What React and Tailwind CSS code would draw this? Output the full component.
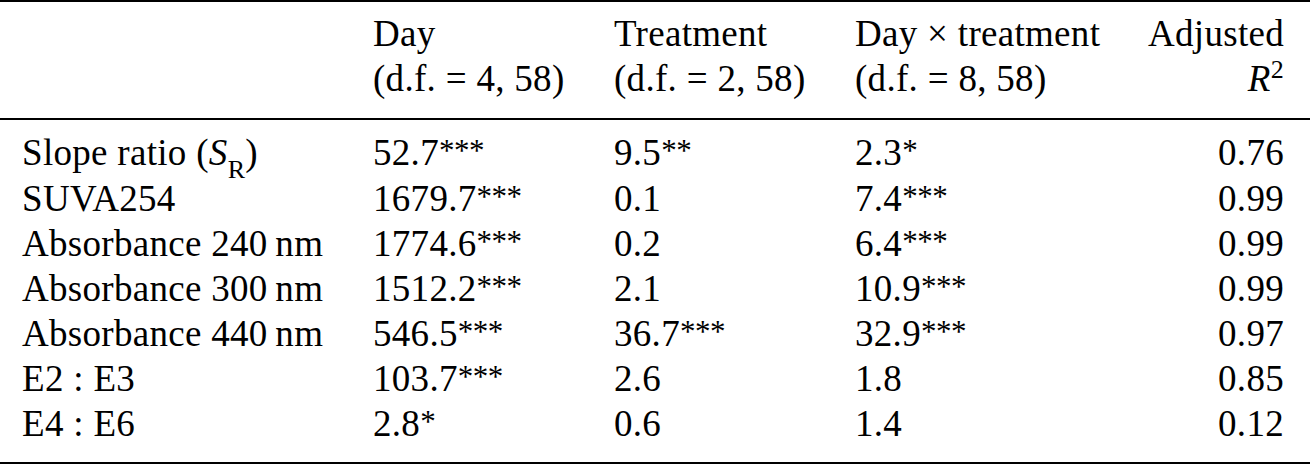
import React from 'react';

const ROWS = [
  { label: <>Slope ratio (<i>S</i><sub className="text-[26px] align-[-6px] leading-none">R</sub>)</>, day: ['52.7', '***'], trt: ['9.5', '**'], int: ['2.3', '*'], r2: '0.76' },
  { label: 'SUVA254', day: ['1679.7', '***'], trt: ['0.1'], int: ['7.4', '***'], r2: '0.99' },
  { label: 'Absorbance 240\u2009nm', day: ['1774.6', '***'], trt: ['0.2'], int: ['6.4', '***'], r2: '0.99' },
  { label: 'Absorbance 300\u2009nm', day: ['1512.2', '***'], trt: ['2.1'], int: ['10.9', '***'], r2: '0.99' },
  { label: 'Absorbance 440\u2009nm', day: ['546.5', '***'], trt: ['36.7', '***'], int: ['32.9', '***'], r2: '0.97' },
  { label: 'E2 : E3', day: ['103.7', '***'], trt: ['2.6'], int: ['1.8'], r2: '0.85' },
  { label: 'E4 : E6', day: ['2.8', '*'], trt: ['0.6'], int: ['1.4'], r2: '0.12' },
];

// value with significance stars raised as superscript
const Val = ({ v }) => (
  <span>
    {v[0]}
    {v[1] && <span className="text-[31px] leading-none align-[4px] tracking-[-0.5px]">{v[1]}</span>}
  </span>
);

const GRID = 'grid grid-cols-[351px_241px_241px_1fr_auto] pl-[22px] pr-[26px]';

export default function App() {
  return (
    <div className="w-[1310px] h-[467px] bg-white text-black text-[37px] tracking-[0.3px] leading-[45px] font-['Liberation_Serif',serif]">
      {/* top rule */}
      <div className="h-[2px] bg-black" />

      {/* header */}
      <div className={`${GRID} pt-[9px] pb-[17px]`}>
        <div />
        <div>
          <div>Day</div>
          <div>(d.f. = 4, 58)</div>
        </div>
        <div>
          <div>Treatment</div>
          <div>(d.f. = 2, 58)</div>
        </div>
        <div>
          <div>Day × treatment</div>
          <div>(d.f. = 8, 58)</div>
        </div>
        <div className="text-right">
          <div>Adjusted</div>
          <div>
            <i>R</i>
            <span className="text-[26px] leading-none align-[13px]">2</span>
          </div>
        </div>
      </div>

      {/* mid rule */}
      <div className="h-[2px] bg-black" />

      {/* body */}
      <div className={`${GRID} pt-[10px] pb-[16px]`}>
        {ROWS.map((r, i) => (
          <React.Fragment key={i}>
            <div className="whitespace-nowrap">{r.label}</div>
            <div><Val v={r.day} /></div>
            <div><Val v={r.trt} /></div>
            <div><Val v={r.int} /></div>
            <div className="text-right">{r.r2}</div>
          </React.Fragment>
        ))}
      </div>

      {/* bottom rule */}
      <div className="h-[2px] bg-black" />
    </div>
  );
}
